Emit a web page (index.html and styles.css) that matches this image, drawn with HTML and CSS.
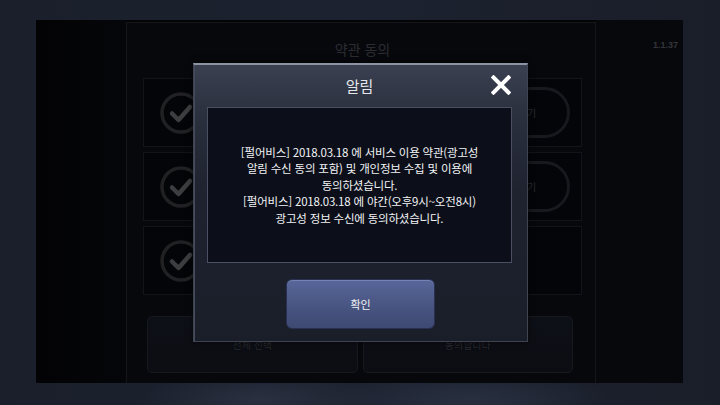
FILE: index.html
```html
<!DOCTYPE html>
<html lang="ko">
<head>
<meta charset="utf-8">
<title>알림</title>
<link rel="stylesheet" href="styles.css">
</head>
<body>
<div class="screen">
  <div class="stage">
    <div class="side-left"></div>
    <div class="panel">
      <div class="panel-title">약관 동의</div>
      <div class="rows">
        <div class="row">
          <svg class="check" width="46" height="46" viewBox="0 0 46 46"><circle cx="23" cy="23" r="19" fill="none" stroke="#212124" stroke-width="3.5"/><path d="M14 23.5 L20.5 30 L32 17" fill="none" stroke="#3d3d40" stroke-width="4.5" stroke-linecap="round" stroke-linejoin="round"/></svg>
          <div class="view-btn">보기</div>
        </div>
        <div class="row">
          <svg class="check" width="46" height="46" viewBox="0 0 46 46"><circle cx="23" cy="23" r="19" fill="none" stroke="#212124" stroke-width="3.5"/><path d="M14 23.5 L20.5 30 L32 17" fill="none" stroke="#3d3d40" stroke-width="4.5" stroke-linecap="round" stroke-linejoin="round"/></svg>
          <div class="view-btn">보기</div>
        </div>
        <div class="row">
          <svg class="check" width="46" height="46" viewBox="0 0 46 46"><circle cx="23" cy="23" r="19" fill="none" stroke="#212124" stroke-width="3.5"/><path d="M14 23.5 L20.5 30 L32 17" fill="none" stroke="#3d3d40" stroke-width="4.5" stroke-linecap="round" stroke-linejoin="round"/></svg>
        </div>
      </div>
      <div class="actions">
        <div class="act">전체 선택</div>
        <div class="act">동의합니다</div>
      </div>
    </div>
    <div class="side-right">
      <div class="version">1.1.37</div>
    </div>
  </div>
</div>

<div class="dialog">
  <div class="dlg-head">
    <div class="dlg-title">알림</div>
    <svg class="close" width="20" height="20" viewBox="0 0 20 20"><path d="M2.5 2.5 L17.5 17.5 M17.5 2.5 L2.5 17.5" stroke="#ffffff" stroke-width="4" stroke-linecap="square"/></svg>
  </div>
  <div class="dlg-box">
    <p>[펄어비스] 2018.03.18 에 서비스 이용 약관(광고성<br>알림 수신 동의 포함) 및 개인정보 수집 및 이용에<br>동의하셨습니다.<br>[펄어비스] 2018.03.18 에 야간(오후9시~오전8시)<br>광고성 정보 수신에 동의하셨습니다.</p>
  </div>
  <div class="dlg-foot">
    <div class="ok">확인</div>
  </div>
</div>
</body>
</html>
```
FILE: styles.css
```css
* { box-sizing: border-box; }
html, body { margin: 0; padding: 0; }
body {
  width: 720px;
  height: 405px;
  overflow: hidden;
  position: relative;
  font-family: "Noto Sans CJK KR", "Noto Sans", sans-serif;
  background: #1c202b;
}
.screen {
  width: 720px;
  height: 405px;
  padding: 20px 37px 22px 36px;
  background:
    radial-gradient(ellipse 120px 30px at 260px 400px, #2a3040 0%, rgba(42,48,64,0) 100%),
    radial-gradient(ellipse 140px 30px at 470px 400px, #283040 0%, rgba(40,48,64,0) 100%),
    linear-gradient(90deg, #1a1f2b 0%, #1d2230 50%, #1a1e29 100%);
}
.stage {
  display: flex;
  height: 363px;
  background: #040406;
}
.side-left {
  width: 90px;
  background: linear-gradient(90deg, #030305, #050609);
}
.panel {
  width: 470px;
  margin-top: 2px;
  border: 1px solid #14161b;
  border-bottom: none;
  background: #07080c;
  display: flex;
  flex-direction: column;
  padding: 0 13px 0 16px;
}
.panel-title {
  height: 55px;
  padding-top: 16px;
  text-align: center;
  font-size: 14px;
  line-height: 20px;
  color: #2a2c32;
}
.rows {
  display: flex;
  flex-direction: column;
  gap: 5px;
}
.row {
  height: 69px;
  background: #040508;
  border: 1px solid #121419;
  display: flex;
  align-items: center;
  padding-left: 14px;
  position: relative;
}
.check { display: block; }
.view-btn {
  position: absolute;
  right: 11px;
  top: 8px;
  width: 86px;
  height: 51px;
  border: 3px solid #17191e;
  border-radius: 26px;
  display: flex;
  align-items: center;
  justify-content: center;
  font-size: 10px;
  color: #292b31;
}
.actions {
  display: flex;
  gap: 5px;
  margin-top: 21px;
  padding: 0 9px 0 4px;
}
.act {
  flex: 1;
  height: 57px;
  border: 1px solid #171920;
  border-radius: 5px;
  background: linear-gradient(180deg, #0e1017, #0b0d13);
  display: flex;
  align-items: center;
  justify-content: center;
  font-size: 10px;
  color: #2a2c32;
  text-shadow: 0 0 1px #000;
}
.side-right {
  width: 87px;
  background: #07080b;
  padding: 20px 5px 0 0;
}
.version {
  text-align: right;
  font-family: "Liberation Sans", sans-serif;
  font-weight: bold;
  font-size: 9px;
  color: #34353a;
}

.dialog {
  position: absolute;
  left: 193px;
  top: 63px;
  width: 335px;
  height: 279px;
  border: 1px solid #3e4452;
  border-top: 2px solid #8c93a3;
  background: linear-gradient(180deg, #3a4051 0%, #2b303e 18%, #1f2330 45%, #1a1e29 100%);
  box-shadow: inset 1px 0 0 #454b5a, 0 0 6px rgba(0,0,0,0.6);
  padding: 0 15px 0 13px;
}
.dlg-head {
  height: 42px;
  position: relative;
  display: flex;
  align-items: center;
  justify-content: center;
}
.dlg-title {
  font-size: 15px;
  color: #e4e6ea;
  line-height: 20px;
  margin-top: -1px;
}
.close {
  position: absolute;
  right: 1px;
  top: 10px;
}
.dlg-box {
  height: 156px;
  background: #0c0f1a;
  border: 1px solid #4a5061;
  display: flex;
  align-items: center;
  justify-content: center;
}
.dlg-box p {
  margin: 0;
  text-align: center;
  font-size: 11.5px;
  letter-spacing: -0.2px;
  line-height: 16.5px;
  color: #f2f3f5;
}
.dlg-foot {
  display: flex;
  justify-content: center;
  padding-top: 16px;
}
.ok {
  width: 149px;
  height: 50px;
  border-radius: 6px;
  border: 1px solid #2a3150;
  background: linear-gradient(180deg, #58679a 0%, #4a5683 50%, #3e4a72 100%);
  box-shadow: inset 0 1px 0 #7483b4;
  display: flex;
  align-items: center;
  justify-content: center;
  font-size: 11px;
  color: #f2f2f5;
  margin-left: 2px;
}
```
